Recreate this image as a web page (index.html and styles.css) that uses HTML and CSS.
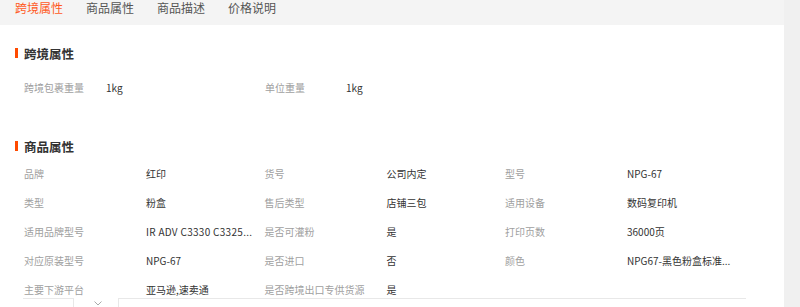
FILE: index.html
```html
<!DOCTYPE html>
<html lang="zh-CN">

<head>
  <title>商品详情</title>
  <meta charset="utf-8">
  <link rel="stylesheet" href="styles.css">
</head>

<body>
  <div class="page">
    <main class="detail">
      <nav class="tabs">
        <a class="tab active">跨境属性</a>
        <a class="tab">商品属性</a>
        <a class="tab">商品描述</a>
        <a class="tab">价格说明</a>
      </nav>

      <section class="block block-cross">
        <h2 class="block-title">跨境属性</h2>
        <div class="attrs attrs-cross">
          <span class="label">跨境包裹重量</span>
          <span class="value">1kg</span>
          <span class="label">单位重量</span>
          <span class="value">1kg</span>
        </div>
      </section>

      <section class="block block-goods">
        <h2 class="block-title">商品属性</h2>
        <div class="attrs attrs-goods">
          <span class="label">品牌</span>
          <span class="value">红印</span>
          <span class="label">货号</span>
          <span class="value">公司内定</span>
          <span class="label">型号</span>
          <span class="value">NPG-67</span>

          <span class="label">类型</span>
          <span class="value">粉盒</span>
          <span class="label">售后类型</span>
          <span class="value">店铺三包</span>
          <span class="label">适用设备</span>
          <span class="value">数码复印机</span>

          <span class="label">适用品牌型号</span>
          <span class="value value-wide">IR ADV C3330 C3325...</span>
          <span class="label">是否可灌粉</span>
          <span class="value">是</span>
          <span class="label">打印页数</span>
          <span class="value">36000页</span>

          <span class="label">对应原装型号</span>
          <span class="value">NPG-67</span>
          <span class="label">是否进口</span>
          <span class="value">否</span>
          <span class="label">颜色</span>
          <span class="value">NPG67-黑色粉盒标准...</span>

          <span class="label">主要下游平台</span>
          <span class="value">亚马逊,速卖通</span>
          <span class="label">是否跨境出口专供货源</span>
          <span class="value">是</span>
        </div>
      </section>

      <div class="bottom-bar">
        <div class="bar-select"></div>
        <svg class="bar-arrow" width="8" height="5" viewBox="0 0 8 5">
          <polyline points="0.5,0.5 4,4 7.5,0.5" fill="none" stroke="#aaa" stroke-width="1" />
        </svg>
        <div class="bar-input"></div>
      </div>
    </main>
    <aside class="side"></aside>
  </div>
</body>

</html>
```

FILE: styles.css
```css
* {
  font-family: "Noto Sans CJK SC", sans-serif;
  box-sizing: border-box;
}

html,
body {
  margin: 0;
  height: 100%;
  overflow: hidden;
}

.page {
  display: flex;
  height: 100%;
}

.detail {
  position: relative;
  width: 784px;
  background-color: #ffffff;
}

.side {
  flex: 1;
  background-color: #f0f0f0;
}

.tabs {
  display: flex;
  gap: 23px;
  height: 25px;
  padding-left: 15px;
  background-color: #f4f4f4;
}

.tab {
  font-size: 12px;
  line-height: 15px;
  color: #555555;
}

.tab.active {
  color: #ff5a1e;
}

.block-title {
  display: flex;
  align-items: center;
  height: 16px;
  margin: 0;
  padding-left: 15px;
  font-size: 12.5px;
  font-weight: bold;
  color: #333333;
}

.block-title::before {
  content: "";
  width: 3px;
  height: 10px;
  margin-right: 6px;
  background-color: #ff4a00;
}

.block-cross {
  margin-top: 20px;
}

.block-goods {
  margin-top: 36px;
}

.attrs {
  display: grid;
  padding-left: 24px;
  font-size: 10px;
  line-height: 29px;
}

.attrs-cross {
  margin-top: 12px;
  grid-template-columns: 82px 159px 81px auto;
}

.attrs-goods {
  margin-top: 5px;
  grid-template-columns: repeat(3, 122px 118.5px);
}

.label {
  color: #a0a0a0;
  white-space: nowrap;
}

.value {
  color: #333333;
  white-space: nowrap;
}

.value-wide {
  letter-spacing: 0.3px;
}

.bottom-bar {
  position: absolute;
  top: 298px;
  left: 23px;
  display: flex;
  width: 723px;
  height: 20px;
}

.bar-select {
  width: 51px;
  border-top: 1px solid #e8e8e8;
  border-right: 1px solid #e8e8e8;
  background-color: #ffffff;
}

.bar-arrow {
  margin: 3px 16px 0 20px;
}

.bar-input {
  flex: 1;
  border-top: 1px solid #e8e8e8;
  border-left: 1px solid #e8e8e8;
  background-color: #ffffff;
}
```
